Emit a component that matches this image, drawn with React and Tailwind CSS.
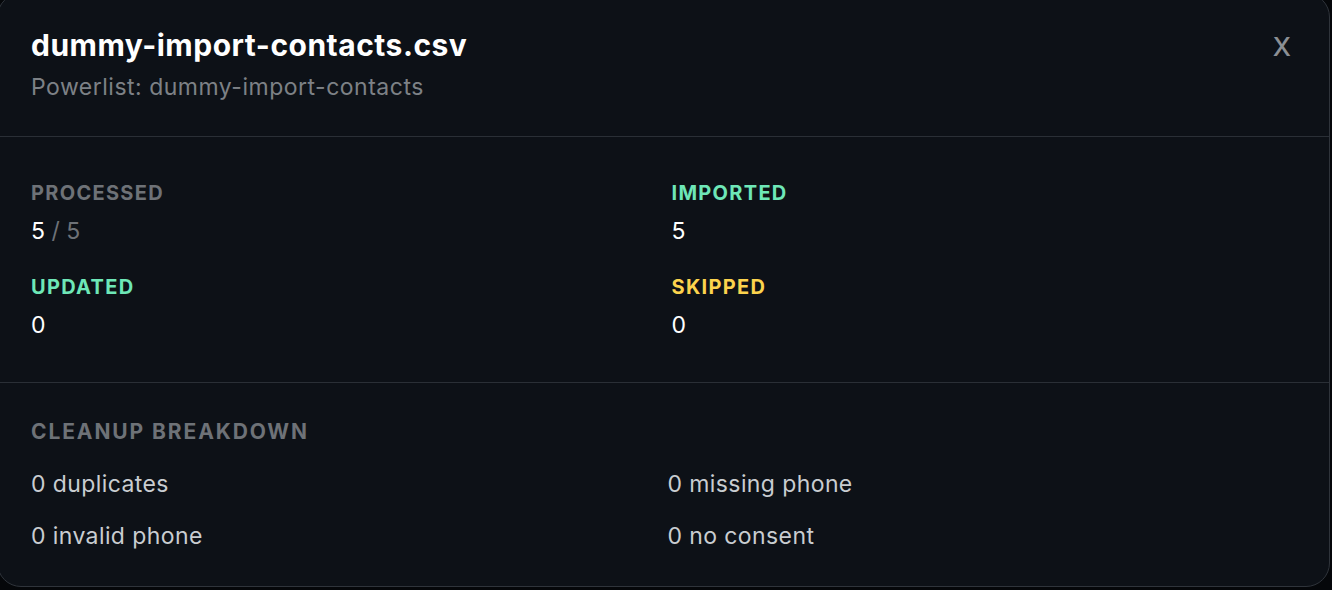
import React from "react";

const stats = [
  { label: "Processed", value: 5, total: 5, color: "text-[#6e7277]" },
  { label: "Imported", value: 5, color: "text-[#6ee7b7]" },
  { label: "Updated", value: 0, color: "text-[#6ee7b7]" },
  { label: "Skipped", value: 0, color: "text-[#fcd34d]" },
];

const cleanup = [
  "0 duplicates",
  "0 missing phone",
  "0 invalid phone",
  "0 no consent",
];

function App() {
  return (
    <div className="min-h-[590px] bg-[#05070a] overflow-hidden font-['Inter',sans-serif]">
      <div className="ml-[-3px] mt-[-7px] w-[1333px] h-[594px] bg-[#0d1117] border border-[#2f343b] rounded-[24px] flex flex-col">
        <div className="flex items-start justify-between pl-[33px] pr-[38px] pt-[33px] pb-[34px] border-b border-[#2a2f36]">
          <div>
            <h2 className="text-[30px] leading-[36px] font-bold text-white tracking-[0.5px]">
              dummy-import-contacts.csv
            </h2>
            <p className="mt-[9px] text-[23px] leading-[30px] text-[#7d8186] tracking-[0.5px]">
              Powerlist: dummy-import-contacts
            </p>
          </div>
          <button type="button" className="mt-[3px] text-[26px] leading-[34px] font-medium text-[#8b8f94]">
            X
          </button>
        </div>

        <div className="grid grid-cols-2 gap-x-4 gap-y-[30px] pl-[33px] pr-[33px] pt-[43px] pb-[44px] border-b border-[#2a2f36]">
          {stats.map((s) => (
            <div key={s.label}>
              <p className={`text-[20px] leading-[26px] font-bold uppercase tracking-[1.3px] ${s.color}`}>
                {s.label}
              </p>
              <p className="mt-[12px] text-[23px] leading-[26px] text-white">
                {s.value}
                {s.total !== undefined && (
                  <span className="text-[#6e7277]"> / {s.total}</span>
                )}
              </p>
            </div>
          ))}
        </div>

        <div className="pl-[33px] pr-[33px] pt-[35px]">
          <p className="text-[21px] leading-[28px] font-bold uppercase tracking-[1.9px] text-[#6e7277]">
            Cleanup breakdown
          </p>
          <div className="mt-[23px] grid grid-cols-2 gap-x-2 gap-y-[22px]">
            {cleanup.map((c) => (
              <p key={c} className="text-[23px] leading-[30px] text-[#c9cdd1] tracking-[0.4px]">
                {c}
              </p>
            ))}
          </div>
        </div>
      </div>
    </div>
  );
}

export default App;
